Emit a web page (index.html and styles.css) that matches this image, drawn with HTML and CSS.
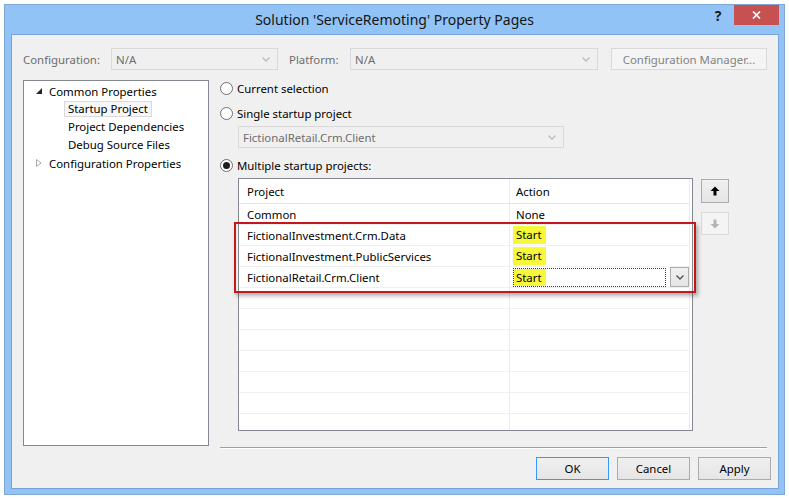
FILE: index.html
```html
<!DOCTYPE html>
<html>
<head>
<meta charset="utf-8">
<title>Property Pages</title>
<link rel="stylesheet" href="styles.css">
</head>
<body>
<div class="window">
  <div class="titlebar">
    <div class="title">Solution 'ServiceRemoting' Property Pages</div>
    <div class="help">?</div>
    <div class="close"><svg width="9" height="8" viewBox="0 0 9 8"><path d="M1 0.5 L8 7.5 M8 0.5 L1 7.5" stroke="#fff" stroke-width="1.7" fill="none"/></svg></div>
  </div>
  <div class="client">
    <div class="config-row">
      <span class="lbl lbl-config">Configuration:</span>
      <div class="combo combo-config"><span>N/A</span><svg class="chev" width="8" height="5" viewBox="0 0 8 5"><path d="M0.5 0.5 L4 4 L7.5 0.5" stroke="#bcbcbc" stroke-width="1.3" fill="none"/></svg></div>
      <span class="lbl lbl-platform">Platform:</span>
      <div class="combo combo-platform"><span>N/A</span><svg class="chev" width="8" height="5" viewBox="0 0 8 5"><path d="M0.5 0.5 L4 4 L7.5 0.5" stroke="#bcbcbc" stroke-width="1.3" fill="none"/></svg></div>
      <button class="btn btn-cfgmgr" disabled>Configuration Manager...</button>
    </div>
    <div class="main">
      <div class="tree">
        <div class="node lvl0"><svg class="exp" width="6" height="6" viewBox="0 0 6 6"><path d="M6 0 L6 6 L0 6 Z" fill="#262626"/></svg>Common Properties</div>
        <div class="node lvl1"><span class="item sel">Startup Project</span></div>
        <div class="node lvl1"><span class="item">Project Dependencies</span></div>
        <div class="node lvl1"><span class="item">Debug Source Files</span></div>
        <div class="node lvl0"><svg class="exp" width="6" height="8" viewBox="0 0 6 8"><path d="M0.5 0.5 L5 4 L0.5 7.5 Z" fill="none" stroke="#a6a6a6" stroke-width="1"/></svg>Configuration Properties</div>
      </div>
      <div class="pane">
        <div class="radio"><span class="rb"></span>Current selection</div>
        <div class="radio r2"><span class="rb"></span>Single startup project</div>
        <div class="combo combo-single"><span>FictionalRetail.Crm.Client</span><svg class="chev" width="8" height="5" viewBox="0 0 8 5"><path d="M0.5 0.5 L4 4 L7.5 0.5" stroke="#bcbcbc" stroke-width="1.3" fill="none"/></svg></div>
        <div class="radio r3"><span class="rb on"><span class="dot"></span></span>Multiple startup projects:</div>
        <div class="grid-area">
          <div class="grid">
            <div class="gtable">
              <div class="gr head"><div class="c1">Project</div><div class="c2">Action</div></div>
              <div class="gr"><div class="c1">Common</div><div class="c2">None</div></div>
              <div class="gr"><div class="c1">FictionalInvestment.Crm.Data</div><div class="c2"><span class="hl">Start</span></div></div>
              <div class="gr"><div class="c1">FictionalInvestment.PublicServices</div><div class="c2"><span class="hl">Start</span></div></div>
              <div class="gr"><div class="c1">FictionalRetail.Crm.Client</div><div class="c2 edit"><div class="editbox"><span class="hl hl-in">Start</span></div><div class="ddbtn"><svg width="8" height="5" viewBox="0 0 8 5"><path d="M0.5 0.5 L4 4 L7.5 0.5" stroke="#555" stroke-width="1.4" fill="none"/></svg></div></div></div>
              <div class="gr"><div class="c1"></div><div class="c2"></div></div>
              <div class="gr"><div class="c1"></div><div class="c2"></div></div>
              <div class="gr"><div class="c1"></div><div class="c2"></div></div>
              <div class="gr"><div class="c1"></div><div class="c2"></div></div>
              <div class="gr"><div class="c1"></div><div class="c2"></div></div>
              <div class="gr"><div class="c1"></div><div class="c2"></div></div>
              <div class="gr"><div class="c1"></div><div class="c2"></div></div>
            </div>
          </div>
          <div class="movers">
            <div class="mv up"><svg width="10" height="10" viewBox="0 0 10 10"><path d="M5 0.5 L9.5 5 L6.5 5 L6.5 9.5 L3.5 9.5 L3.5 5 L0.5 5 Z" fill="#000"/></svg></div>
            <div class="mv down"><svg width="10" height="10" viewBox="0 0 10 10"><path d="M5 9.5 L9.5 5 L6.5 5 L6.5 0.5 L3.5 0.5 L3.5 5 L0.5 5 Z" fill="#b4b4b4"/></svg></div>
          </div>
          <div class="annot"></div>
        </div>
        <div class="sep"></div>
      </div>
    </div>
    <div class="buttons">
      <button class="btn dlg default">OK</button>
      <button class="btn dlg">Cancel</button>
      <button class="btn dlg">Apply</button>
    </div>
  </div>
</div>
</body>
</html>
```
FILE: styles.css
```css
* { box-sizing: border-box; }
html, body { margin: 0; padding: 0; background: #fff; }
body {
  font-family: "Noto Sans", "Open Sans", sans-serif;
  font-size: 11.4px;
  color: #000;
}
.window {
  margin: 4px 0 0 4px;
  width: 781px;
  height: 491px;
  border: 1px solid #7ea7d3;
  background: #91c3f6;
  padding: 0 5px 5px 6px;
  display: flex;
  flex-direction: column;
}
.titlebar {
  height: 29px;
  display: flex;
  align-items: flex-start;
  padding-left: 69px;
}
.title {
  flex: 1;
  text-align: center;
  font-size: 14px;
  line-height: 29px;
  color: #151515;
}
.help {
  width: 18px;
  margin-right: 7px;
  text-align: center;
  font-weight: bold;
  font-size: 14px;
  line-height: 22px;
  color: #1b1b1b;
}
.close {
  width: 45px;
  height: 20px;
  background: #c75050;
  display: flex;
  align-items: center;
  justify-content: center;
}
.client {
  flex: 1;
  background: #f0f0f0;
  border: 1px solid #75a4d8;
  padding: 13px 7px 0 11px;
  display: flex;
  flex-direction: column;
}
.config-row { display: flex; align-items: center; height: 22px; }
.lbl { color: #6d6d6d; }
.lbl-config { width: 88px; }
.lbl-platform { margin-left: 11px; width: 61px; }
.combo {
  height: 22px;
  border: 1px solid #d9d9d9;
  display: flex;
  align-items: center;
  justify-content: space-between;
  padding: 0 7px 0 4px;
  color: #6d6d6d;
}
.combo-config { width: 167px; }
.combo-platform { width: 248px; }
.btn {
  font-family: inherit;
  font-size: inherit;
  color: #000;
  background: linear-gradient(#f0f0f0, #e5e5e5);
  border: 1px solid #acacac;
  padding: 0;
  margin: 0;
}
.btn-cfgmgr {
  margin-left: 13px;
  width: 156px;
  height: 22px;
  background: #f4f4f4;
  border-color: #d9d9d9;
  color: #838383;
}
.main { display: flex; margin-top: 10px; height: 369px; }
.tree {
  width: 186px;
  height: 366px;
  border: 1px solid #828790;
  background: #fff;
  padding-top: 1px;
}
.node { height: 18px; display: flex; align-items: center; white-space: nowrap; }
.lvl0 { padding-left: 12px; }
.exp { width: 6px; margin-right: 7px; flex: none; }
.lvl1 { padding-left: 40px; }
.item { height: 16px; line-height: 14px; padding: 0 3px; border: 1px solid transparent; }
.item.sel { border-color: #dadada; background: #f7f7f7; }
.pane { margin-left: 11px; width: 547px; display: flex; flex-direction: column; }
.radio { height: 16px; display: flex; align-items: center; }
.rb {
  width: 13px;
  height: 13px;
  border-radius: 50%;
  border: 1px solid #707070;
  background: #fff;
  margin-right: 4px;
  display: flex;
  align-items: center;
  justify-content: center;
  flex: none;
}
.dot { width: 7px; height: 7px; border-radius: 50%; background: #1e1e1e; }
.r2, .r3 { margin-top: 9px; }
.combo-single { margin: 5px 0 0 18px; width: 326px; }
.grid-area { display: flex; margin: 5px 0 0 18px; position: relative; align-items: flex-start; }
.grid {
  width: 455px;
  height: 253px;
  border: 1px solid #828790;
  background: #fff;
  padding-right: 2px;
  overflow: hidden;
}
.gtable { border-right: 1px solid #e9ecef; height: 100%; }
.gr { display: flex; height: 21px; border-bottom: 1px solid #f0f0f0; }
.gr.head { height: 25px; border-bottom-color: #e5e5e5; }
.c1 {
  width: 271px;
  padding-left: 8px;
  border-right: 1px solid #e9ecef;
  display: flex;
  align-items: center;
  white-space: nowrap;
}
.c2 { flex: 1; padding-left: 6px; display: flex; align-items: center; }
.hl { background: #f7f73c; height: 18px; line-height: 18px; padding: 0 4px 0 3px; margin-left: -3px; }
.c2.edit { padding-left: 3px; }
.editbox { width: 153px; height: 19px; border: 1px dotted #3a3a3a; display: flex; align-items: center; }
.hl-in { margin-left: 0; padding: 0 4px 0 2px; height: 17px; line-height: 17px; }
.ddbtn {
  margin-left: 4px;
  width: 19px;
  height: 20px;
  border: 1px solid #acacac;
  background: linear-gradient(#f0f0f0, #e5e5e5);
  display: flex;
  align-items: center;
  justify-content: center;
}
.movers { margin-left: 8px; display: flex; flex-direction: column; }
.mv {
  width: 28px;
  height: 24px;
  border: 1px solid #acacac;
  background: linear-gradient(#f0f0f0, #e5e5e5);
  display: flex;
  align-items: center;
  justify-content: center;
}
.mv.up { margin-top: 1px; }
.mv.down { margin-top: 9px; height: 23px; border-color: #d9d9d9; background: #f4f4f4; }
.annot {
  position: absolute;
  left: -4px;
  top: 44px;
  width: 462px;
  height: 71px;
  border: 2px solid #c4161c;
  box-shadow: 2px 3px 4px rgba(0, 0, 0, 0.3);
}
.sep { margin-top: auto; height: 2px; border-top: 1px solid #a0a0a0; background: #fff; }
.buttons { display: flex; justify-content: flex-end; gap: 8px; margin-top: 8px; }
.dlg { width: 73px; height: 23px; }
.dlg.default { border-color: #3399ff; }
```
